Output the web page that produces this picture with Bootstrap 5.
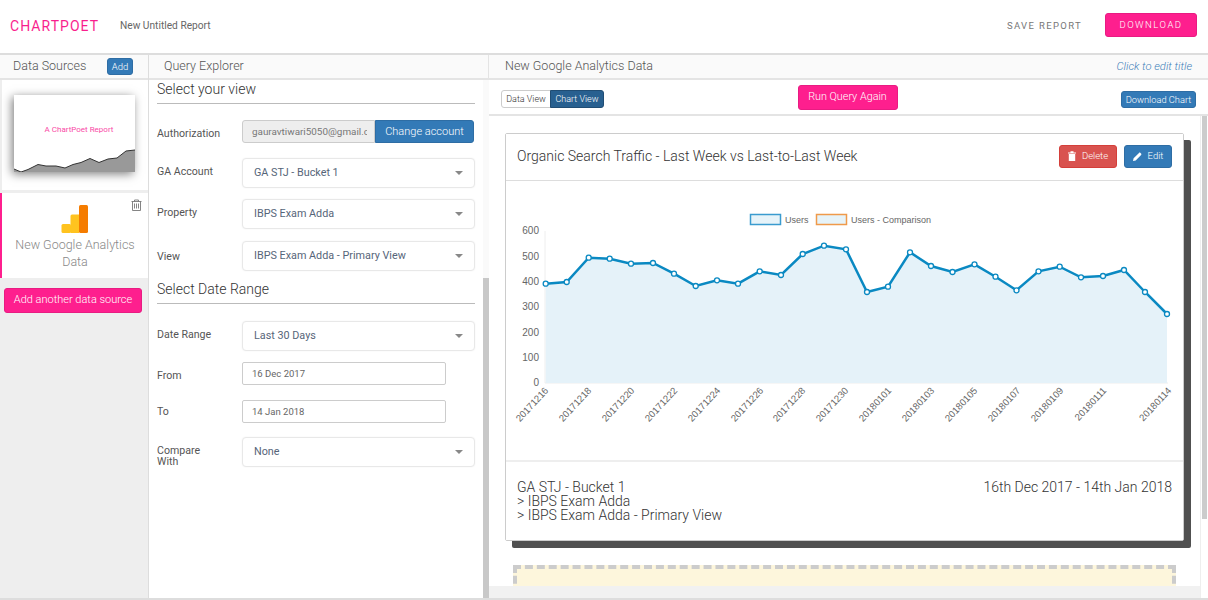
<!DOCTYPE html>
<html lang="en">
<head>
<meta charset="utf-8">
<title>ChartPoet</title>
<link href="https://cdn.jsdelivr.net/npm/bootstrap@5.3.0/dist/css/bootstrap.min.css" rel="stylesheet">
<style>
html,body{height:600px;overflow:hidden}
body{font-family:Roboto,"Liberation Sans",sans-serif;font-weight:300;color:#333;background:#fff;font-size:11.5px}
.app{height:600px;border-bottom:2px solid #ddd}
.topbar{height:55px;flex:none;border-bottom:2px solid #ddd;padding:0 11px 0 10px}
.brand{color:#f91f8e;font-size:14px;font-weight:400;letter-spacing:1.05px;width:110px;margin-bottom:1px}
.reportname{font-size:10.2px;color:#666;font-weight:400;margin-bottom:1px}
.savelink{font-size:9.5px;letter-spacing:1.35px;color:#777;font-weight:400;margin-right:23px}
.btn.pinkbtn{background:#fe1f8e;border:1px solid #e81c82;color:#fff;border-radius:3px;font-weight:300}
.btn.dlbtn{width:92px;height:24px;padding:0 0 1px;font-size:9.5px;letter-spacing:1.5px;line-height:17px;margin-bottom:3px}
.panes{height:543px;flex:none}
.pane-a{width:149px;background:#eee;border-right:1px solid #ddd;flex:none}
.pane-b{width:340px;border-right:1px solid #e4e4e4;flex:none}
.panehead{height:25px;flex:none;background:#fafafa;border-bottom:2px solid #e4e4e4;font-size:12.5px;color:#555;padding-top:2px;line-height:17px}
.pane-a .panehead{padding-left:13px;padding-right:15px;align-items:flex-start}
.pane-b .panehead{padding-left:15px}
.pane-c .panehead{padding:2px 16px 0 16px}
.btn.addbtn{background:#337ab7;border:1px solid #2e6da4;color:#fff;font-size:9.5px;padding:0;width:26px;height:17px;line-height:15px;border-radius:3px;font-weight:300;margin-top:1px}
.editlink{font-style:italic;color:#3f80b9;font-size:11.2px;font-weight:300;padding-top:1px}
.srccard{background:#fff;margin-left:2px}
.thumbcard{height:110px;padding:15px 13px 17px 12px}
.thumbsheet{height:77px;box-shadow:-2px 2px 9px rgba(0,0,0,.5);background:#fff}
.thumbsheet svg{width:121px;height:77px;display:block}
.thumbtext{font-size:8px;fill:#f94aa6;font-family:Roboto,sans-serif;font-weight:400}
.activecard{height:85px;margin:3px 0 0;border-left:2px solid #fe1f8e;padding:12px 0 0 0;color:#888;font-size:12.5px;line-height:17px;text-align:center}
.trashicon{top:6px;right:6px;width:11px;height:12px}
.galogo{width:28px;height:29px;margin-bottom:2px}
.btn.addsource{width:138px;height:25px;margin:10px 0 0 4px;font-size:11px;padding:0;font-weight:300}
.formarea{padding:0 8px 0 8px;width:334px;flex:1}
.secthead{font-size:14px;font-weight:300;color:#333;border-bottom:1px solid #bbb;height:24px;line-height:18px;margin:0}
.dategap{margin-top:9px}
.fieldrow{display:flex;align-items:center;font-size:10.6px;color:#555;font-weight:400}
.gap11{margin-top:11px}.gap12{margin-top:12px}.gap14{margin-top:14px}.gap15{margin-top:15px}.gap16{margin-top:16px}.gap17{margin-top:17px}
.fieldlabel{width:85px;line-height:11px;flex:none}
.labelup{padding-bottom:4px}
.labeldown{padding-top:3px}
.labeldown3{padding-top:8px}
.selectish{width:233px;height:30px;border:1px solid #e8e8e8;border-radius:4px;box-shadow:0 0 2px rgba(0,0,0,.06);padding:0 11px;color:#566579;font-size:10.8px;background:#fff;line-height:28px;font-weight:400}
.caretish{width:0;height:0;border-left:4px solid transparent;border-right:4px solid transparent;border-top:4px solid #888}
.authgroup{width:232px}
.authinput.form-control{width:133px;height:23px;flex:none;background:#eee;border:1px solid #ccc;font-size:9.9px;color:#777;padding:0 7px 0 9px;border-radius:3px 0 0 3px;font-weight:400}
.btn.authbtn{background:#337ab7;border:1px solid #2e6da4;color:#fff;width:99px;height:23px;padding:2px 0 0;font-size:11px;border-radius:0 3px 3px 0;font-weight:300;margin-left:0!important}
.dateinput.form-control{width:204px;height:23px;border:1px solid #ccc;border-radius:2px;font-size:9.5px;color:#666;padding:0 9px;font-weight:400}
.vtrackb{width:6px;background:#fafafa;flex:none}
.vthumbb{margin-top:198px;flex:1;background:#c8c8c8}
.pane-c{min-width:0}
.nomin{min-height:0}
.nominw{min-width:0}
.toolbar{height:36px;flex:none;border-bottom:2px solid #e4e4e4;padding:0 12px 0 12px}
.viewgroup{margin-top:4px}
.btn.viewbtn{font-size:9px;padding:0;height:18px;line-height:16px;border-radius:3px;font-weight:300}
.btn.viewoff{width:50px;background:#fff;border:1px solid #ccc;color:#333}
.btn.viewon{width:54px;background:#286090;border:1px solid #204d74;color:#fff}
.btn.runbtn{width:100px;height:25px;padding:0;font-size:10.8px;margin:1px 30px 0 0;font-weight:300}
.btn.dlchart{width:75px;height:17px;padding:0;background:#337ab7;border:1px solid #2e6da4;color:#fff;font-size:9.3px;line-height:15px;border-radius:3px;font-weight:300;margin-top:5px}
.chartarea{padding:17px 0 0 16px;overflow:hidden;min-height:0}
.chartcard.card{width:679px;height:408px;border:1px solid #ccc;border-radius:2px;box-shadow:7px 7px 0 #505050;flex:none;--bs-card-cap-bg:#fff}
.chartcard .card-header{height:47px;padding:0 11px 1px;background:#fff;border-bottom:1px solid #ddd;font-size:14px;color:#333;border-radius:0}
.actionset{gap:7px}
.btn.smallact{height:23px;padding:0;font-size:9.5px;border-radius:3px;color:#fff;font-weight:300;display:flex;align-items:center;justify-content:center;gap:6px}
.btn.deletebtn{width:58px;background:#d9534f;border:1px solid #d43f3a}
.btn.editbtn{width:48px;background:#337ab7;border:1px solid #2e6da4}
.plotwrap{height:279px;padding:0}
.plotwrap svg{width:677px;height:279px;display:block}
.chartcard .card-footer{height:81px;background:#fff;border-top:2px solid #eee;padding:18px 11px 0;font-size:14px;line-height:14px;color:#333;border-radius:0}
.axis{font-family:"Liberation Sans",sans-serif;font-size:10px;fill:#666}
.ticklabels{font-size:9.6px}
.legendtext{font-family:"Liberation Sans",sans-serif;font-size:9px;fill:#666}
.dropzone{width:663px;height:40px;margin:24px 0 0 8px;background:#fdf6dc;border:4px dashed #ccc;flex:none}
.hbar{height:12px;background:#f1f1f1;flex:none}
.vtrackc{width:8px;flex:none;padding:0 1px 0 1px;background:#fff;border-left:1px solid #eee}
.vthumbc{height:403px;background:#ccc}
</style>
</head>
<body>
<div class="app d-flex flex-column">
  <header class="topbar d-flex align-items-center">
    <span class="brand">CHARTPOET</span>
    <span class="reportname">New Untitled Report</span>
    <span class="savelink ms-auto">SAVE REPORT</span>
    <button class="btn pinkbtn dlbtn" type="button">DOWNLOAD</button>
  </header>
  <div class="panes d-flex">
    <aside class="pane-a d-flex flex-column">
      <div class="panehead d-flex justify-content-between"><span>Data Sources</span><button class="btn addbtn" type="button">Add</button></div>
      <div class="srccard thumbcard">
        <div class="thumbsheet">
          <svg viewBox="0 0 121 77" role="img" aria-label="Report thumbnail">
            <text class="thumbtext" x="65" y="37" text-anchor="middle">A ChartPoet Report</text>
            <polygon fill="#999" points="0,74 7,77 14,74.5 24,69.5 32,71 42,71 51,73 59,69.5 67,67.5 76,63.5 85,67.5 94,64 103,63 112,56 121,55 121,77 0,77"/>
            <polyline fill="none" stroke="#333" stroke-width="1" points="0,74 7,77 14,74.5 24,69.5 32,71 42,71 51,73 59,69.5 67,67.5 76,63.5 85,67.5 94,64 103,63 112,56 121,55"/>
          </svg>
        </div>
      </div>
      <div class="srccard activecard position-relative">
        <svg class="trashicon position-absolute" viewBox="0 0 11 12"><path d="M.5 2.500h10M3.500 2.500V1h4v1.500M1.500 2.500v9h8v-9M3.500 4.500v5M5.500 4.500v5M7.500 4.500v5" fill="none" stroke="#777" stroke-width=".9"/></svg>
        <svg class="galogo d-block mx-auto" viewBox="0 0 28 29"><rect x="18" y="0" width="9" height="28" rx="1.5" fill="#f57c00"/><path d="M18 9.500h-7a1.500 1.500 0 0 0-1.500 1.500V28H18z" fill="#ffc31f"/><rect x=".5" y="19" width="9.500" height="9" rx="1.500" fill="#ffc31f"/></svg>
        <div>New Google Analytics<br>Data</div>
      </div>
      <button class="btn pinkbtn addsource" type="button">Add another data source</button>
    </aside>
    <section class="pane-b d-flex flex-column">
      <div class="panehead">Query Explorer</div>
      <div class="d-flex flex-fill nomin">
        <div class="formarea">
          <h2 class="secthead">Select your view</h2>
          <div class="fieldrow gap16">
            <span class="fieldlabel labeldown">Authorization</span>
            <div class="input-group flex-nowrap authgroup">
              <input class="form-control authinput" value="gauravtiwari5050@gmail.com" readonly>
              <button class="btn authbtn" type="button">Change account</button>
            </div>
          </div>
          <div class="fieldrow gap15"><span class="fieldlabel labelup">GA Account</span><div class="selectish d-flex justify-content-between align-items-center"><span>GA STJ - Bucket 1</span><i class="caretish"></i></div></div>
          <div class="fieldrow gap11"><span class="fieldlabel labelup">Property</span><div class="selectish d-flex justify-content-between align-items-center"><span>IBPS Exam Adda</span><i class="caretish"></i></div></div>
          <div class="fieldrow gap12"><span class="fieldlabel">View</span><div class="selectish d-flex justify-content-between align-items-center"><span>IBPS Exam Adda - Primary View</span><i class="caretish"></i></div></div>
          <h2 class="secthead dategap">Select Date Range</h2>
          <div class="fieldrow gap17"><span class="fieldlabel labelup">Date Range</span><div class="selectish d-flex justify-content-between align-items-center"><span>Last 30 Days</span><i class="caretish"></i></div></div>
          <div class="fieldrow gap11"><span class="fieldlabel labeldown">From</span><input class="form-control dateinput" value="16 Dec 2017" readonly></div>
          <div class="fieldrow gap15"><span class="fieldlabel">To</span><input class="form-control dateinput" value="14 Jan 2018" readonly></div>
          <div class="fieldrow gap14"><span class="fieldlabel labeldown3">Compare<br>With</span><div class="selectish d-flex justify-content-between align-items-center"><span>None</span><i class="caretish"></i></div></div>
        </div>
        <div class="vtrackb d-flex flex-column"><div class="vthumbb"></div></div>
      </div>
    </section>
    <main class="pane-c d-flex flex-column flex-fill">
      <div class="panehead d-flex justify-content-between"><span>New Google Analytics Data</span><span class="editlink">Click to edit title</span></div>
      <div class="toolbar d-flex align-items-center justify-content-between">
        <div class="btn-group viewgroup" role="group"><button class="btn viewbtn viewoff" type="button">Data View</button><button class="btn viewbtn viewon" type="button">Chart View</button></div>
        <button class="btn pinkbtn runbtn" type="button">Run Query Again</button>
        <button class="btn dlchart" type="button">Download Chart</button>
      </div>
      <div class="d-flex flex-fill nomin">
        <div class="d-flex flex-column flex-fill nominw">
          <div class="chartarea d-flex flex-column flex-fill">
            <div class="card chartcard">
              <div class="card-header d-flex align-items-center justify-content-between">
                <span>Organic Search Traffic - Last Week vs Last-to-Last Week</span>
                <div class="d-flex actionset">
                  <button class="btn smallact deletebtn" type="button"><svg width="8" height="10" viewBox="0 0 8 10"><path d="M0 1.500h8v1H0zM2.500 1.500V.3h3v1.200zM.8 3h6.400v7H.8z" fill="#fff"/></svg>Delete</button>
                  <button class="btn smallact editbtn" type="button"><svg width="9" height="9" viewBox="0 0 9 9"><path d="M0 9l.6-2.700L6 .9c.4-.4 1-.4 1.400 0l.7.7c.4.4.4 1 0 1.400L2.700 8.400z" fill="#fff"/></svg>Edit</button>
                </div>
              </div>
              <div class="plotwrap">
                <svg viewBox="0 0 677 279" role="img" aria-label="Users line chart">
                  <rect x="244.500" y="33.500" width="30" height="10" fill="#e6f3f9" stroke="#3a9bcf" stroke-width="1.500"/>
                  <text class="legendtext" x="279" y="41.500">Users</text>
                  <rect x="310.500" y="33.500" width="30" height="10" fill="#e6f3f9" stroke="#ef9a4b" stroke-width="1.500"/>
                  <text class="legendtext" x="345" y="41.500">Users - Comparison</text>
                  <g class="axis" text-anchor="end">
                    <text x="33" y="53">600</text><text x="33" y="78.500">500</text><text x="33" y="103.500">400</text><text x="33" y="129">300</text><text x="33" y="154.500">200</text><text x="33" y="179.500">100</text><text x="33" y="205">0</text>
                  </g>
                  <path d="M39 50V202H662" fill="none" stroke="#eee"/>
                  <polygon fill="#e5f2f9" points="39.700,102.700 60.700,101 82.700,76.700 103.700,77.700 125,82.700 147,82 168,92.700 189.700,105 211,99.300 232,102.700 253.700,90.300 275,94 296.700,73 318,64.700 340,68.300 361,111 382,105.700 404,71.300 425,85 446.500,91 468.500,83.300 489.500,95.700 510.500,109.300 532.500,90.300 553.700,85.700 575,96.300 597,95 618,89 639,111 661,133 661,202 39.700,202"/>
                  <polyline fill="none" stroke="#0a89c2" stroke-width="2.500" points="39.700,102.700 60.700,101 82.700,76.700 103.700,77.700 125,82.700 147,82 168,92.700 189.700,105 211,99.300 232,102.700 253.700,90.300 275,94 296.700,73 318,64.700 340,68.300 361,111 382,105.700 404,71.300 425,85 446.500,91 468.500,83.300 489.500,95.700 510.500,109.300 532.500,90.300 553.700,85.700 575,96.300 597,95 618,89 639,111 661,133"/>
                  <g fill="#fff" stroke="#0a89c2" stroke-width="1.300">
                    <circle cx="39.700" cy="102.700" r="2.500"/><circle cx="60.700" cy="101" r="2.500"/><circle cx="82.700" cy="76.700" r="2.500"/><circle cx="103.700" cy="77.700" r="2.500"/><circle cx="125" cy="82.700" r="2.500"/><circle cx="147" cy="82" r="2.500"/><circle cx="168" cy="92.700" r="2.500"/><circle cx="189.700" cy="105" r="2.500"/><circle cx="211" cy="99.300" r="2.500"/><circle cx="232" cy="102.700" r="2.500"/><circle cx="253.700" cy="90.300" r="2.500"/><circle cx="275" cy="94" r="2.500"/><circle cx="296.700" cy="73" r="2.500"/><circle cx="318" cy="64.700" r="2.500"/><circle cx="340" cy="68.300" r="2.500"/><circle cx="361" cy="111" r="2.500"/><circle cx="382" cy="105.700" r="2.500"/><circle cx="404" cy="71.300" r="2.500"/><circle cx="425" cy="85" r="2.500"/><circle cx="446.500" cy="91" r="2.500"/><circle cx="468.500" cy="83.300" r="2.500"/><circle cx="489.500" cy="95.700" r="2.500"/><circle cx="510.500" cy="109.300" r="2.500"/><circle cx="532.500" cy="90.300" r="2.500"/><circle cx="553.700" cy="85.700" r="2.500"/><circle cx="575" cy="96.300" r="2.500"/><circle cx="597" cy="95" r="2.500"/><circle cx="618" cy="89" r="2.500"/><circle cx="639" cy="111" r="2.500"/><circle cx="661" cy="133" r="2.500"/>
                  </g>
                  <g class="axis ticklabels" text-anchor="end">
                    <text transform="translate(43,210) rotate(-47)">20171216</text>
                    <text transform="translate(86,210) rotate(-47)">20171218</text>
                    <text transform="translate(129,210) rotate(-47)">20171220</text>
                    <text transform="translate(172,210) rotate(-47)">20171222</text>
                    <text transform="translate(215,210) rotate(-47)">20171224</text>
                    <text transform="translate(258,210) rotate(-47)">20171226</text>
                    <text transform="translate(300,210) rotate(-47)">20171228</text>
                    <text transform="translate(343,210) rotate(-47)">20171230</text>
                    <text transform="translate(386,210) rotate(-47)">20180101</text>
                    <text transform="translate(429,210) rotate(-47)">20180103</text>
                    <text transform="translate(472,210) rotate(-47)">20180105</text>
                    <text transform="translate(515,210) rotate(-47)">20180107</text>
                    <text transform="translate(558,210) rotate(-47)">20180109</text>
                    <text transform="translate(601,210) rotate(-47)">20180111</text>
                    <text transform="translate(666,210) rotate(-47)">20180114</text>
                  </g>
                </svg>
              </div>
              <div class="card-footer d-flex justify-content-between">
                <div>GA STJ - Bucket 1<br>&gt; IBPS Exam Adda<br>&gt; IBPS Exam Adda - Primary View</div>
                <div>16th Dec 2017 - 14th Jan 2018</div>
              </div>
            </div>
            <div class="dropzone"></div>
          </div>
          <div class="hbar"></div>
        </div>
        <div class="vtrackc"><div class="vthumbc"></div></div>
      </div>
    </main>
  </div>
</div>
<script src="https://cdn.jsdelivr.net/npm/bootstrap@5.3.0/dist/js/bootstrap.bundle.min.js"></script>
</body>
</html>
